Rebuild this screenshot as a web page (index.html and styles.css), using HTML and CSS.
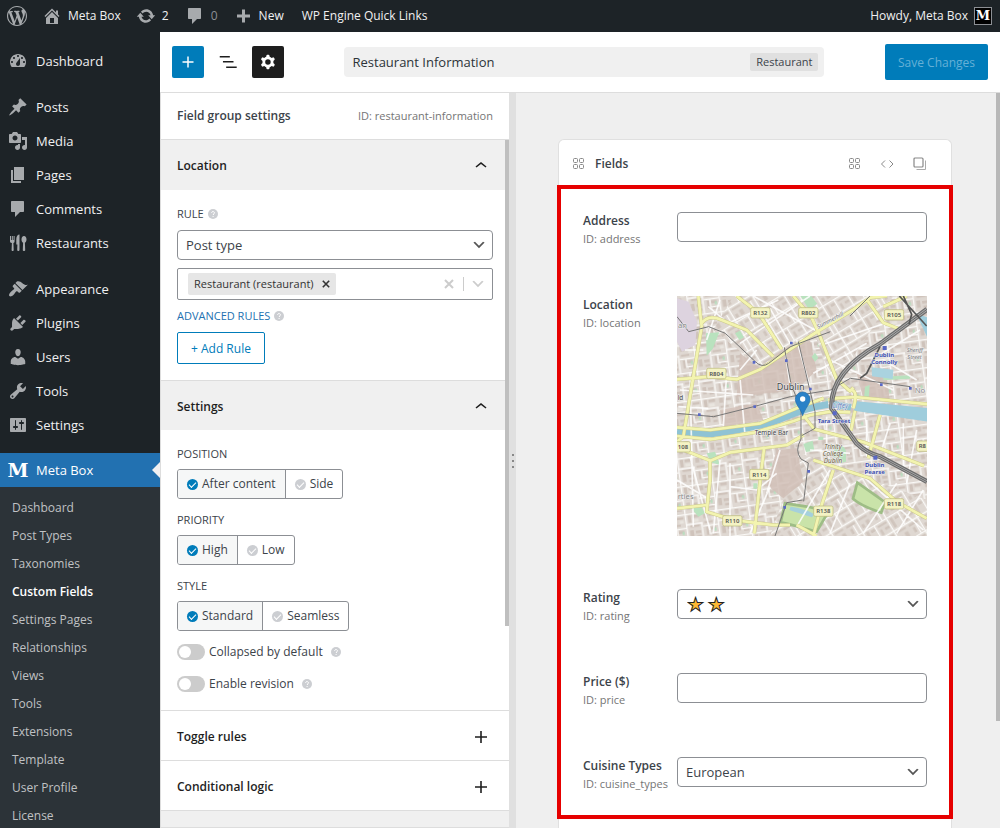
FILE: index.html
```html
<!DOCTYPE html>
<html lang="en">
<head>
<meta charset="utf-8">
<title>Restaurant Information</title>
<link rel="stylesheet" href="styles.css">
</head>
<body>
<svg class="sprite" aria-hidden="true">
  <symbol id="i-down" viewBox="0 0 20 20"><path d="M5 6l5 5 5-5 2 1-7 7-7-7z" fill="currentColor"/></symbol>
  <symbol id="i-up" viewBox="0 0 24 24"><path d="M6.500 12.400L12 8l5.500 4.400-.9 1.200L12 10l-4.500 3.600z" fill="currentColor"/></symbol>
  <symbol id="i-plus" viewBox="0 0 24 24"><path d="M18 11.200h-5.200V6h-1.600v5.200H6v1.600h5.200V18h1.600v-5.200H18z" fill="currentColor"/></symbol>
  <symbol id="i-help" viewBox="0 0 10 10"><circle cx="5" cy="5" r="5" fill="#ccced2"/><path d="M3.500 3.900C3.600 2.100 6.500 2.200 6.500 3.800c0 1-1.400 1.100-1.400 2.200M5.100 7v1" fill="none" stroke="#fff" stroke-width="1"/></symbol>
  <symbol id="i-x" viewBox="0 0 10 10"><path d="M1 1l8 8M9 1L1 9" fill="none" stroke="currentColor" stroke-width="2"/></symbol>
  <symbol id="i-dots" viewBox="0 0 12 12"><g fill="none" stroke="currentColor"><rect x=".5" y=".5" width="4" height="4" rx="1"/><rect x="6.500" y=".5" width="4" height="4" rx="1"/><rect x=".5" y="6.500" width="4" height="4" rx="1"/><rect x="6.500" y="6.500" width="4" height="4" rx="1"/></g></symbol>
  <symbol id="i-comment" viewBox="0 0 20 20"><path fill="currentColor" d="M4 2h11c.6 0 1 .4 1 1v9c0 .6-.4 1-1 1h-3l-5 5v-5H4c-.6 0-1-.4-1-1V3c0-.6.4-1 1-1z"/></symbol>
</svg>

<header class="adminbar">
  <a class="bar-item bar-logo" href="#" aria-label="About WordPress"><svg class="ico" viewBox="0 0 20 20"><path fill="currentColor" d="M20 10c0-5.510-4.490-10-10-10C4.480 0 0 4.490 0 10c0 5.520 4.480 10 10 10 5.510 0 10-4.480 10-10zM7.780 15.370L4.370 6.220c.55-.02 1.170-.08 1.170-.08.5-.06.44-1.130-.06-1.110 0 0-1.450.11-2.370.11-.18 0-.37 0-.58-.01C4.120 2.690 6.870 1.110 10 1.110c2.330 0 4.450.87 6.050 2.340-.68-.11-1.650.39-1.650 1.580 0 .74.45 1.360.9 2.100.35.61.55 1.360.55 2.460 0 1.490-1.400 5-1.400 5l-3.030-8.370c.54-.02.82-.17.82-.17.5-.05.44-1.250-.06-1.220 0 0-1.440.12-2.380.12-.87 0-2.330-.12-2.330-.12-.5-.03-.56 1.200-.06 1.220l.92.08 1.260 3.410zM17.410 10c.24-.64.74-1.870.43-4.250.7 1.290 1.050 2.710 1.050 4.250 0 3.290-1.730 6.240-4.400 7.780.97-2.590 1.940-5.200 2.920-7.780zM6.100 18.090C3.120 16.650 1.110 13.530 1.110 10c0-1.300.23-2.480.72-3.590C3.250 10.300 4.670 14.200 6.100 18.090zm4.030-6.630l2.580 6.980c-.86.29-1.760.45-2.710.45-.79 0-1.570-.11-2.290-.33.81-2.380 1.620-4.740 2.420-7.100z"/></svg></a>
  <a class="bar-item" href="#"><svg class="ico" viewBox="0 0 20 20"><path fill="currentColor" fill-rule="evenodd" d="M16 8.500l1.530 1.530-1.060 1.060L10 4.600l-6.470 6.490-1.060-1.060L10 2.500l4 4v-2h2v4zm-6-2.460l6 5.990V18H4v-5.970zM12 17v-5H8v5h4z"/></svg>Meta Box</a>
  <a class="bar-item" href="#"><svg class="ico" viewBox="0 0 20 20"><path fill="currentColor" d="M10.200 3.280c3.530 0 6.430 2.610 6.920 6h2.080l-3.500 4-3.500-4h2.320c-.45-1.970-2.210-3.450-4.320-3.450-1.450 0-2.730.71-3.540 1.780L4.950 5.660C6.230 4.200 8.110 3.280 10.200 3.280zm-.4 13.440c-3.520 0-6.430-2.610-6.920-6H.8l3.500-4 3.500 4H5.480c.45 1.970 2.210 3.450 4.320 3.450 1.450 0 2.730-.71 3.540-1.780l1.710 1.950c-1.280 1.460-3.150 2.380-5.250 2.380z"/></svg>2</a>
  <a class="bar-item muted" href="#"><svg class="ico" viewBox="0 0 20 20"><use href="#i-comment"/></svg>0</a>
  <a class="bar-item bar-new" href="#"><svg class="ico" viewBox="0 0 20 20"><path fill="currentColor" d="M17 8.500v3h-5v5H9v-5H4v-3h5v-5h3v5z"/></svg>New</a>
  <a class="bar-item" href="#">WP Engine Quick Links</a>
  <a class="bar-item bar-user" href="#">Howdy, Meta Box<span class="avatar">M</span></a>
</header>

<div class="shell">
  <nav class="sidebar" aria-label="Main menu">
    <ul class="menu">
      <li><a href="#"><svg class="ico" viewBox="0 0 20 20"><path fill="currentColor" fill-rule="evenodd" d="M3.760 16h12.480c1.100-1.370 1.760-3.110 1.760-5 0-4.420-3.580-8-8-8s-8 3.580-8 8c0 1.890.66 3.630 1.760 5zM10 4c.55 0 1 .45 1 1s-.45 1-1 1-1-.45-1-1 .45-1 1-1zM6 6c.55 0 1 .45 1 1s-.45 1-1 1-1-.45-1-1 .45-1 1-1zm8 0c.55 0 1 .45 1 1s-.45 1-1 1-1-.45-1-1 .45-1 1-1zm-5.370 5.550L12 7v6c0 1.100-.9 2-2 2s-2-.9-2-2c0-.57.24-1.080.63-1.450zM4 10c.55 0 1 .45 1 1s-.45 1-1 1-1-.45-1-1 .45-1 1-1zm12 0c.55 0 1 .45 1 1s-.45 1-1 1-1-.45-1-1 .45-1 1-1z"/></svg>Dashboard</a></li>
      <li class="gap"><a href="#"><svg class="ico" viewBox="0 0 20 20"><path fill="currentColor" d="M10.440 3.020l1.820-1.820 6.360 6.350-1.830 1.820c-1.050-.68-2.480-.57-3.410.36l-.75.75c-.92.93-1.040 2.350-.35 3.410l-1.830 1.820-2.410-2.410-2.800 2.790c-.42.42-3.380 2.710-3.800 2.290s1.860-3.390 2.280-3.810l2.790-2.790L4.100 9.360l1.830-1.820c1.050.69 2.480.57 3.400-.36l.75-.75c.93-.92 1.050-2.350.36-3.410z"/></svg>Posts</a></li>
      <li><a href="#"><svg class="ico" viewBox="0 0 20 20"><path fill="currentColor" fill-rule="evenodd" d="M13 11V4c0-.55-.45-1-1-1h-1.670L9 1H5L3.670 3H2c-.55 0-1 .45-1 1v7c0 .55.45 1 1 1h10c.55 0 1-.45 1-1zM7 4.500c1.380 0 2.500 1.120 2.500 2.500S8.380 9.500 7 9.500 4.500 8.380 4.500 7 5.620 4.500 7 4.500zM14 6h5v10.500c0 1.380-1.120 2.500-2.500 2.500S14 17.880 14 16.500s1.120-2.500 2.500-2.500c.17 0 .34.02.5.05V9h-3V6zm-4 8.050V13h2v3.500c0 1.380-1.120 2.500-2.500 2.500S7 17.880 7 16.500 8.120 14 9.500 14c.17 0 .34.02.5.05z"/></svg>Media</a></li>
      <li><a href="#"><svg class="ico" viewBox="0 0 20 20"><path fill="currentColor" d="M6 15V2h10v13H6zm-1 1h8v2H3V5h2v11z"/></svg>Pages</a></li>
      <li><a href="#"><svg class="ico" viewBox="0 0 20 20"><use href="#i-comment"/></svg>Comments</a></li>
      <li><a href="#"><svg class="ico" viewBox="0 0 20 20"><path fill="currentColor" d="M2 3h1v4h.8V3h1v4h.8V3h1v5.200c0 1-.5 1.500-1.200 1.800l.3 7c0 1.400-2.100 1.400-2.100 0l.3-7C2.500 9.700 2 9.200 2 8.200zM11.500 1.500v15.300c0 1.700-2.300 1.700-2.300 0l.2-5.300H8.300V6c0-2.500 1.500-4.500 3.200-4.500zM16 3c1.500 0 2.500 1.500 2.500 3.500 0 1.600-.6 2.700-1.600 3.200l.3 7.300c0 1.400-2.400 1.400-2.400 0l.3-7.300c-1-.5-1.600-1.600-1.600-3.200C13.500 4.500 14.500 3 16 3z"/></svg>Restaurants</a></li>
      <li class="gap"><a href="#"><svg class="ico" viewBox="0 0 20 20"><path fill="currentColor" d="M14.480 11.060L7.410 3.990l1.500-1.500c.5-.56 2.300-.47 3.510.32 1.210.8 1.430 1.280 2.910 2.100 1.180.64 2.450 1.260 4.450.85zm-.71.71L6.700 4.700 4.930 6.470c-.39.39-.39 1.020 0 1.410l1.060 1.060c.39.39.39 1.030 0 1.420-.6.6-1.430 1.110-2.210 1.690-.35.26-.7.53-1.010.84C1.430 14.230.4 16.080 1.400 17.070c.99 1 2.840-.03 4.180-1.360.31-.31.58-.66.85-1.020.57-.78 1.080-1.610 1.690-2.210.39-.39 1.020-.39 1.410 0l1.060 1.060c.39.39 1.020.39 1.410 0z"/></svg>Appearance</a></li>
      <li><a href="#"><svg class="ico" viewBox="0 0 20 20"><path fill="currentColor" d="M13.110 4.360L9.870 7.600 8 5.730l3.240-3.240c.35-.34 1.050-.2 1.560.32.52.51.66 1.210.31 1.550zm-8 1.770l.91-1.120 9.010 9.010-1.190.84c-.71.71-2.630 1.160-3.820 1.160H6.140L4.900 17.260c-.59.59-1.540.59-2.120 0-.59-.58-.59-1.530 0-2.120l1.240-1.240v-3.880c0-1.130.4-3.190 1.090-3.890zm7.260 3.970l3.240-3.240c.34-.35 1.040-.21 1.550.31.52.51.66 1.210.31 1.550l-3.240 3.250z"/></svg>Plugins</a></li>
      <li><a href="#"><svg class="ico" viewBox="0 0 20 20"><path fill="currentColor" d="M10 9.250c-2.270 0-2.730-3.440-2.730-3.440C7 4.020 7.820 2 9.970 2c2.160 0 2.980 2.020 2.710 3.810 0 0-.41 3.440-2.680 3.440zm0 2.570L12.720 10c2.390 0 4.520 2.330 4.520 4.530v2.490s-3.650 1.130-7.240 1.130c-3.650 0-7.240-1.130-7.240-1.130v-2.490c0-2.250 1.940-4.480 4.470-4.480z"/></svg>Users</a></li>
      <li><a href="#"><svg class="ico" viewBox="0 0 20 20"><path fill="currentColor" fill-rule="evenodd" d="M16.680 9.770c-1.340 1.340-3.300 1.670-4.950.99l-5.410 6.520c-.99.99-2.590.99-3.580 0s-.99-2.590 0-3.570l6.520-5.420c-.68-1.650-.35-3.610.99-4.950 1.280-1.280 3.120-1.620 4.720-1.060l-2.890 2.890 2.820 2.820 2.860-2.870c.53 1.580.18 3.390-1.080 4.650zM3.810 16.210c.4.39 1.040.39 1.430 0 .4-.4.4-1.040 0-1.430-.39-.4-1.030-.4-1.430 0-.39.39-.39 1.030 0 1.430z"/></svg>Tools</a></li>
      <li><a href="#"><svg class="ico" viewBox="0 0 20 20"><path fill="currentColor" fill-rule="evenodd" d="M18 16V4c0-.55-.45-1-1-1H3c-.55 0-1 .45-1 1v12c0 .55.45 1 1 1h14c.55 0 1-.45 1-1zM8 11h1c.55 0 1 .45 1 1s-.45 1-1 1H8v1.500c0 .28-.22.5-.5.5s-.5-.22-.5-.5V13H6c-.55 0-1-.45-1-1s.45-1 1-1h1V5.500c0-.28.22-.5.5-.5s.5.22.5.5V11zm5-2h-1c-.55 0-1-.45-1-1s.45-1 1-1h1V5.500c0-.28.22-.5.5-.5s.5.22.5.5V7h1c.55 0 1 .45 1 1s-.45 1-1 1h-1v5.500c0 .28-.22.5-.5.5s-.5-.22-.5-.5V9z"/></svg>Settings</a></li>
      <li class="gap current"><a href="#"><span class="m-logo" aria-hidden="true">M</span>Meta Box</a></li>
    </ul>
    <ul class="submenu">
      <li><a href="#">Dashboard</a></li>
      <li><a href="#">Post Types</a></li>
      <li><a href="#">Taxonomies</a></li>
      <li><a class="active" href="#">Custom Fields</a></li>
      <li><a href="#">Settings Pages</a></li>
      <li><a href="#">Relationships</a></li>
      <li><a href="#">Views</a></li>
      <li><a href="#">Tools</a></li>
      <li><a href="#">Extensions</a></li>
      <li><a href="#">Template</a></li>
      <li><a href="#">User Profile</a></li>
      <li><a href="#">License</a></li>
    </ul>
  </nav>

  <main class="editor">
    <div class="toolbar">
      <div class="tools">
        <button class="tool add" aria-label="Add field"><svg viewBox="0 0 24 24"><use href="#i-plus"/></svg></button>
        <button class="tool" aria-label="Structure"><svg viewBox="0 0 24 24"><path fill="currentColor" d="M3 5.500h11v1.500H3zm3.500 5.500H18v1.500H6.500zm3.500 6h11.500v1.500H10z"/></svg></button>
        <button class="tool gear" aria-label="Settings"><svg viewBox="0 0 24 24"><path fill="currentColor" fill-rule="evenodd" d="M10.289 4.836A1 1 0 0111.275 4h1.306a1 1 0 01.987.836l.244 1.466c.787.26 1.503.679 2.108 1.218l1.393-.522a1 1 0 011.216.437l.653 1.130a1 1 0 01-.23 1.273l-1.148.944a6.025 6.025 0 010 2.435l1.149.946a1 1 0 01.23 1.272l-.653 1.130a1 1 0 01-1.216.437l-1.394-.522c-.605.54-1.320.958-2.108 1.218l-.244 1.466a1 1 0 01-.987.836h-1.306a1 1 0 01-.986-.836l-.244-1.466a5.995 5.995 0 01-2.108-1.218l-1.394.522a1 1 0 01-1.217-.436l-.653-1.131a1 1 0 01.23-1.272l1.149-.946a6.026 6.026 0 010-2.435l-1.148-.944a1 1 0 01-.23-1.272l.653-1.131a1 1 0 011.217-.437l1.393.522a5.994 5.994 0 012.108-1.218l.244-1.466zM14.929 12a3 3 0 11-6 0 3 3 0 016 0z"/></svg></button>
      </div>
      <div class="title-box">
        <input class="title-input" type="text" value="Restaurant Information" aria-label="Field group title">
        <span class="tag">Restaurant</span>
      </div>
      <button class="save">Save Changes</button>
    </div>

    <div class="columns">
      <section class="panel">
        <div class="panel-head"><h2>Field group settings</h2><span>ID: restaurant-information</span></div>
        <div class="panel-scroll">
          <button class="section-head open" aria-expanded="true">Location<svg viewBox="0 0 24 24"><use href="#i-up"/></svg></button>
          <div class="section-body">
            <label class="caption" for="rule">RULE <svg class="help"><use href="#i-help"/></svg></label>
            <div class="select-wrap rule-select"><select id="rule"><option>Post type</option></select><svg class="chev"><use href="#i-down"/></svg></div>
            <div class="multi">
              <span class="chip">Restaurant (restaurant)<button aria-label="Remove Restaurant"><svg><use href="#i-x"/></svg></button></span>
              <button class="clear" aria-label="Clear"><svg><use href="#i-x"/></svg></button>
              <i class="divider"></i>
              <button class="open-list" aria-label="Open list"><svg><use href="#i-down"/></svg></button>
            </div>
            <div class="caption link">ADVANCED RULES <svg class="help"><use href="#i-help"/></svg></div>
            <button class="add-rule">+ Add Rule</button>
          </div>

          <button class="section-head open ruled" aria-expanded="true">Settings<svg viewBox="0 0 24 24"><use href="#i-up"/></svg></button>
          <div class="section-body">
            <fieldset>
              <legend class="caption">POSITION</legend>
              <div class="segmented">
                <label><input type="radio" name="position" checked>After content</label>
                <label><input type="radio" name="position">Side</label>
              </div>
            </fieldset>
            <fieldset>
              <legend class="caption">PRIORITY</legend>
              <div class="segmented">
                <label><input type="radio" name="priority" checked>High</label>
                <label><input type="radio" name="priority">Low</label>
              </div>
            </fieldset>
            <fieldset>
              <legend class="caption">STYLE</legend>
              <div class="segmented">
                <label><input type="radio" name="style" checked>Standard</label>
                <label><input type="radio" name="style">Seamless</label>
              </div>
            </fieldset>
            <label class="toggle"><input type="checkbox">Collapsed by default <svg class="help"><use href="#i-help"/></svg></label>
            <label class="toggle"><input type="checkbox">Enable revision <svg class="help"><use href="#i-help"/></svg></label>
          </div>

          <button class="section-head ruled" aria-expanded="false">Toggle rules<svg viewBox="0 0 24 24"><use href="#i-plus"/></svg></button>
          <button class="section-head ruled" aria-expanded="false">Conditional logic<svg viewBox="0 0 24 24"><use href="#i-plus"/></svg></button>
          <div class="panel-end"></div>
          <i class="thumb"></i>
        </div>
      </section>

      <div class="resizer"><i></i><i></i><i></i></div>

      <section class="canvas">
        <i class="thumb canvas-thumb"></i>
        <div class="card">
          <div class="card-head">
            <svg><use href="#i-dots"/></svg>
            <h2>Fields</h2>
            <div class="card-actions">
              <button aria-label="Add"><svg><use href="#i-dots"/></svg></button>
              <button aria-label="Code"><svg viewBox="0 0 12 12"><path d="M4 2.500L0.500 6 4 9.500M8.500 2.500L12 6 8.500 9.500" fill="none" stroke="currentColor"/></svg></button>
              <button aria-label="Duplicate"><svg class="big" viewBox="0 0 14 14"><rect x="1" y="1" width="9" height="9" rx="1" fill="none" stroke="currentColor" stroke-width="1.200"/><path d="M12.500 3.500v9h-9" fill="none" stroke="#aaa"/></svg></button>
            </div>
          </div>
          <div class="fields">
            <div class="field"><div class="name"><label for="address">Address</label><small>ID: address</small></div><input id="address" type="text"></div>
            <div class="field"><div class="name"><b>Location</b><small>ID: location</small></div>
              <svg class="map" viewBox="21 18 750 720" role="img" aria-label="Map of Dublin">
                <defs>
                  <pattern id="blocks" width="96" height="84" patternUnits="userSpaceOnUse" patternTransform="rotate(-8)">
                    <path fill="#cfc3bb" d="M4 6h12v14H4zM20 8h20v7H20zM54 5h9v23h-9zM68 6h20v8H68zM5 29h25v6H5zM58 36h28v7H58zM8 47h8v24H8zM21 49h17v9H21zM55 51h11v22H55zM72 54h16v8H72zM74 68h14v8H74zM24 68h16v7H24z"/>
                    <path fill="#e9e5df" d="M28 19h12v8H28zM68 19h17v9H68z"/>
                    <path fill="none" stroke="#faf9f7" stroke-width="4" d="M0 2h96M47 2v82M0 43h47M47 33h49M93 33v51M18 43v25h28"/>
                    <path fill="#b7dfbf" d="M32 52h6v10h-6z"/>
                  </pattern>
                  <pattern id="blocks2" width="82" height="92" patternUnits="userSpaceOnUse" patternTransform="rotate(-31)">
                    <path fill="#d0c5bd" d="M4 8h30v6H4zM4 22h7v18H4zM20 23h15v8H20zM46 7h9v32h-9zM61 10h14v8H61zM4 52h30v7H4zM10 67h8v16h-8zM46 52h29v6H46zM46 72h9v12h-9zM63 67h12v16H63z"/>
                    <path fill="none" stroke="#faf9f7" stroke-width="4" d="M0 2h82M39 0v92M0 46h82M78 0v46M25 60v32"/>
                  </pattern>
                </defs>
                <rect x="21" y="18" width="750" height="720" fill="#dfd8d2"/>
                <rect x="21" y="18" width="750" height="720" fill="url(#blocks)"/>
                <path d="M190 18h480L490 290 430 120 270 230 130 120zM390 490l381 140v108H300z" fill="#dfd8d2"/>
                <path d="M190 18h480L490 290 430 120 270 230 130 120zM390 490l381 140v108H300z" fill="url(#blocks2)"/>
                <path fill="#d1c0b7" opacity=".85" d="M210 190l60 45 75-60 75-25 20 90-60 60-180 20zM150 360l110-20 20 50-120 20zM320 480l60-5 20 100-60 50-50-40zM560 250l90 10 10 75-80-8z"/>
                <path fill="#ddd3df" d="M21 25l35 10 25 60-5 70-40 20-15-30z"/>
                <g fill="#b9e2be"><path d="M108 130l40-3-20 50-18 20zM392 18l30-2 20 25-25 18zM195 130l15-8 12 20-14 8zM425 200l10-12 10 15-10 12zM585 290l14-5-3 42h-14zM640 260l80-4v10l-80 5zM110 490l25-5 15 40-28-8zM400 462l28-10 5 30-25 4zM491 480q30-25 37 5v30q-30 10-30-10zM60 650l30-8 15 28-20 10zM250 580h12v16h-12zM445 440h15v10h-15z"/></g>
                <path d="M345 640q80 10 130 25l-35 60q-70-20-108-28zM562 578q50 35 82 58l-10 32q-60-20-85-42z" fill="#c9e3a9" stroke="#9ebd86" stroke-width="8"/>
                <path d="M362 650q40 5 70 22l-6 10q-50-16-68-22z" fill="#a5d0dc"/>
                <path d="M605 232l65 7-2 28-62-8z" fill="#aad3df"/>
                <path d="M21 424Q80 433 130 431 260 414 330 388 410 352 475 343M490 343L543 352" fill="none" stroke="#8fc3d4" stroke-width="20"/>
                <path d="M552 333l220 21v41l-220-33zM738 70l34 12v60z" fill="#9fcddc"/>
                <g fill="none" stroke="#fff" stroke-width="5" opacity=".85">
                  <path d="M115 50l60 50 150-70M250 18l200 110M210 160L420 18M300 55l60 105M455 165l190-65M430 250l160-90M480 210l190 90M30 300l220 15M60 250l10 460M150 30l-40 120M170 250l-10 160M210 265l15 170M260 180l-50 60M345 180l20 140M380 150l40 140M45 180h55M25 350l90 5M590 390v110M470 380v110M420 480l120 10M660 400l-25 80M700 400v150M740 420l-30 160M21 570l100 60M60 500l60 220M150 510l-20 220M180 520v220M180 590l80 10 60-50M330 480l-40 130M480 540l-100 170M540 580l-60 150M580 560l180 160M680 580l-100 150M760 600l-80 130M620 200l130-80M640 210l100 60M300 590l-60 140"/>
                </g>
                <g fill="none" stroke="#cdcb8c" stroke-width="11" stroke-linejoin="round"><path id="r1" d="M85 18L95 110 40 440 21 455M21 268l100-8 80 8 70-30 150-100 130-80 50-35 50-5M95 100q20-28 60-10l75 30 80 80M200 18l65 50 70 110M370 18l55 65 25 55 50 130 40 35 10-10M640 50l70-32M590 28l50 70 50 20M475 330l20-5 60-4 220 22M21 412l100 8 150-20 120-50 70-25M21 438l100 10 130-20 120-35 50-18 60-10 60 2M400 375l32 42 150 40 180 70M555 362l-12 60M630 375l-35 130M545 300q20 5 5 55M21 472l100 40 60-25 170-22 50-30M120 510v60l-10 95 80 25 120 15 50 0M283 470l-10 80-20 180M21 655l90-10M430 510l170 55 80 70 90 50M490 540l-40 120-20 78M380 705l60 33"/></g>
                <g fill="none" stroke="#f3f4b0" stroke-width="8" stroke-linejoin="round"><use href="#r1"/></g>
                <g fill="none" stroke="#777" stroke-width="3"><path d="M21 80l35 45 60-15 50 20 90 85q20 20 40 5l65-50 120-45M21 370l110 10 120-30 110-30 120-20 60-35 180 25M343 172l20 110 30 75v90q-20 35 0 60l22 12-14 115M385 155l50 210v50l-40 22M315 738l35-100 48-8M600 18l-60 60"/></g>
                <g fill="none"><path d="M771 58L630 162Q480 245 485 355L560 460Q590 490 630 500L771 575" stroke="#6c6c6c" stroke-width="15"/><path d="M771 58L630 162Q480 245 485 355L560 460Q590 490 630 500L771 575" stroke="#aaa" stroke-width="8"/><path d="M771 58L630 162Q480 245 485 355L560 460Q590 490 630 500L771 575" stroke="#666" stroke-width="3"/><path d="M688 18l82 90M700 18l25 55-8 30M630 170l-40 80-20 15" stroke="#555" stroke-width="5"/></g>
                <g fill="#5968c5"><path d="M488 364h12v12h-12zM610 497h12v12h-12zM638 168h12v12h-12zM360 155h8v8h-8zM248 213h8v8h-8zM417 293h8v8h-8zM345 208h8v8h-8zM630 280h8v8h-8zM717 291h8v8h-8zM250 346h8v8h-8zM84 370h8v8h-8zM412 540h8v8h-8zM340 648h8v8h-8z"/></g>
                <g class="shields"><g><rect x="242" y="53" width="58" height="31" rx="5"/><rect x="386" y="53" width="58" height="31" rx="5"/><rect x="643" y="59" width="58" height="31" rx="5"/><rect x="110" y="235" width="58" height="31" rx="5"/><rect x="10" y="455" width="51" height="31" rx="5"/><rect x="239" y="538" width="58" height="31" rx="5"/><rect x="643" y="626" width="58" height="31" rx="5"/><rect x="431" y="648" width="58" height="31" rx="5"/><rect x="158" y="677" width="58" height="31" rx="5"/><rect x="740" y="453" width="50" height="31" rx="5"/></g>
                <text x="271" y="75">R132</text><text x="415" y="75">R802</text><text x="672" y="81">R105</text><text x="139" y="257">R804</text><text x="39" y="477">108</text><text x="268" y="560">R114</text><text x="672" y="648">R118</text><text x="460" y="670">R138</text><text x="187" y="699">R110</text><text x="757" y="475">R8</text></g>
                <g class="stations"><text x="643" y="200">Dublin</text><text x="643" y="222">Connolly</text><text x="492" y="398">Tara Street</text><text x="614" y="530">Dublin</text><text x="614" y="552">Pearse</text></g>
                <g class="places"><text x="320" y="299" class="city">Dublin</text><text x="254" y="434">Temple Bar</text><text x="23" y="628" class="faint">rties</text><text x="23" y="330">ld</text><text x="24" y="113" class="faint">an</text><text x="734" y="310" class="faint">No</text><text x="710" y="187" class="street">Sheriff</text><text x="712" y="208" class="street">Street</text><text x="488" y="353" class="river">Liffey</text><text x="445" y="116" class="street" transform="rotate(-28 445 116)">Summerhill</text></g>
                <g class="college"><text x="489" y="476">Trinity</text><text x="489" y="497">College</text><text x="489" y="518">Dublin</text></g>
                <path d="M398 377C392 355 376 344 376 328a22 22 0 0 1 44 0c0 16-16 27-22 49z" fill="#2a81c7" stroke="#216daa" stroke-width="2"/><circle cx="398" cy="327" r="8" fill="#fff"/>
              </svg>
            </div>
            <div class="field"><div class="name"><label for="rating">Rating</label><small>ID: rating</small></div><div class="select-wrap"><select id="rating" class="stars"><option>★&thinsp;★</option></select><svg class="chev"><use href="#i-down"/></svg></div></div>
            <div class="field"><div class="name"><label for="price">Price ($)</label><small>ID: price</small></div><input id="price" type="text"></div>
            <div class="field"><div class="name"><label for="cuisine">Cuisine Types</label><small>ID: cuisine_types</small></div><div class="select-wrap"><select id="cuisine"><option>European</option></select><svg class="chev"><use href="#i-down"/></svg></div></div>
          </div>
        </div>
      </section>
    </div>
  </main>
</div>
</body>
</html>
```
FILE: styles.css
```css
* { box-sizing: border-box; }
body {
  margin: 0;
  height: 100vh;
  overflow: hidden;
  display: flex;
  flex-direction: column;
  font: 13px/20px "Open Sans", "Noto Sans", sans-serif;
  color: #3c434a;
}
button, input, select { font: inherit; color: inherit; margin: 0; }
button { border: 0; background: none; padding: 0; }
ul { list-style: none; margin: 0; padding: 0; }
a { color: inherit; text-decoration: none; }
h2 { margin: 0; font-size: 12px; font-weight: 600; }
.sprite { position: absolute; width: 0; height: 0; }
.ico { width: 20px; height: 20px; color: #a7aaad; flex: none; }

/* Admin bar */
.adminbar {
  flex: none;
  display: flex;
  height: 32px;
  background: #1d2327;
  color: #f0f0f1;
  font-size: 12px;
}
.bar-item { display: flex; align-items: center; gap: 6px; padding: 0 8px 0 7px; white-space: nowrap; }
.bar-logo { width: 35px; }
.bar-item.muted { color: #8c8f94; padding-left: 8px; }
.bar-new { padding-right: 11px; }
.bar-user { margin-left: auto; }
.avatar {
  width: 18px;
  height: 18px;
  border: 1px solid #8c8f94;
  background: #000;
  color: #fff;
  font: bold 13px/16px "DejaVu Serif", serif;
  text-align: center;
}

/* Sidebar */
.shell { flex: 1; display: flex; min-height: 0; }
.sidebar { width: 160px; flex: none; background: #1d2327; padding-top: 12px; color: #f0f0f1; }
.menu a { display: flex; align-items: center; gap: 8px; height: 34px; padding-left: 8px; }
.menu .gap { margin-top: 12px; }
.menu .current { position: relative; margin-top: 11px; background: #2271b1; color: #fff; }
.current::after {
  content: "";
  position: absolute;
  right: 0;
  top: 9px;
  border: 8px solid transparent;
  border-left: 0;
  border-right-color: #f0f0f1;
}
.m-logo { width: 20px; display: flex; justify-content: center; font: bold 19px/20px "DejaVu Serif", serif; }
.submenu { background: #2c3338; color: #c0c2c4; padding: 7px 0 12px; font-size: 12px; }
.submenu a { display: block; padding-left: 12px; line-height: 28px; }
.submenu .active { color: #fff; font-weight: 600; }

/* Top toolbar */
.editor { flex: 1; min-width: 0; display: flex; flex-direction: column; background: #fff; }
.toolbar {
  flex: none;
  height: 61px;
  display: flex;
  align-items: center;
  justify-content: space-between;
  padding: 0 12px;
  border-bottom: 1px solid #ddd;
}
.tools { display: flex; gap: 8px; }
.tool { width: 32px; height: 32px; border-radius: 2px; color: #1e1e1e; display: grid; place-items: center; }
.tool svg { width: 22px; height: 22px; }
.tool.add { background: #007cba; color: #fff; }
.tool.gear { background: #1e1e1e; color: #fff; }
.title-box { display: flex; align-items: center; width: 480px; height: 30px; background: #f0f0f0; border-radius: 4px; padding: 0 6px 0 8px; }
.title-input { flex: 1; min-width: 0; border: 0; background: none; padding: 0; color: #2c3338; }
.tag { background: #e0e0e0; border-radius: 2px; padding: 0 6px; font-size: 11px; line-height: 18px; }
.save { height: 36px; padding: 2px 13px 0; background: #007cba; color: #66b0d6; border-radius: 2px; font-size: 12px; }

/* Settings panel */
.columns { flex: 1; min-height: 0; display: flex; }
.panel { width: 349px; flex: none; border-left: 1px solid #ddd; display: flex; flex-direction: column; }
.panel-head {
  flex: none;
  height: 47px;
  display: flex;
  align-items: center;
  justify-content: space-between;
  padding: 0 16px;
  border-bottom: 1px solid #ddd;
}
.panel-head span { font-size: 11px; color: #757575; }
.panel-scroll { position: relative; flex: 1; overflow: hidden; }
.thumb { position: absolute; right: 0; top: 0; width: 4px; height: 486px; background: #bfbfbf; }
.section-head {
  display: flex;
  align-items: center;
  justify-content: space-between;
  width: 100%;
  height: 50px;
  padding: 2px 16px 0;
  font-size: 12px;
  font-weight: 600;
  color: #1e1e1e;
}
.section-head svg { width: 24px; height: 24px; }
.section-head.open { background: #f0f0f0; }
.section-head.ruled { border-top: 1px solid #ddd; }
.section-body { padding: 16px; }
.caption { display: flex; align-items: center; gap: 4px; height: 16px; font-size: 11px; line-height: 16px; padding: 0; }
.caption.link { margin: 8px 0; color: #2271b1; }
.help { width: 10px; height: 10px; flex: none; }

.select-wrap { position: relative; }
.select-wrap select, .field input {
  width: 100%;
  height: 30px;
  display: block;
  appearance: none;
  border: 1px solid #8c8f94;
  border-radius: 4px;
  background: #fff;
  padding: 0 8px;
}
.chev { position: absolute; right: 6px; top: 7px; width: 16px; height: 16px; color: #555; pointer-events: none; }
.rule-select { margin: 8px 0; }
.multi { display: flex; align-items: center; height: 32px; border: 1px solid #8c8f94; border-radius: 2px; padding: 0 6px 0 10px; color: #ccc; }
.chip { display: flex; align-items: center; gap: 8px; height: 22px; margin-right: auto; padding: 0 6px; border-radius: 2px; background: #e6e6e6; color: #333; font-size: 11px; }
.chip button, .clear { display: grid; }
.chip svg { width: 8px; height: 8px; }
.clear svg { width: 10px; height: 10px; }
.divider { width: 1px; height: 14px; background: #ccc; margin: 0 6px 0 9px; }
.open-list { display: grid; }
.open-list svg { width: 16px; height: 16px; }
.add-rule { height: 32px; padding: 2px 13px 0; border: 1px solid #007cba; border-radius: 2px; color: #007cba; font-size: 12px; }

fieldset { border: 0; margin: 0 0 13px; padding: 0; min-width: 0; }
legend { margin-bottom: 7px; }
.segmented { display: inline-flex; height: 30px; border: 1px solid #8c8f94; border-radius: 3px; overflow: hidden; vertical-align: top; }
.segmented label { display: flex; align-items: center; gap: 4px; padding: 0 9px; font-size: 12px; }
.segmented label + label { border-left: 1px solid #8c8f94; }
.segmented label:first-child { background: #f6f7f7; }
.segmented input { appearance: none; width: 11px; height: 11px; border-radius: 50%; background: #ccced2; display: grid; place-items: center; }
.segmented input:checked { background: #007cba; }
.segmented input::before { content: ""; width: 6px; height: 3px; border: solid #fff; border-width: 0 0 1px 1px; transform: rotate(-45deg); }
.toggle { display: flex; align-items: center; gap: 4px; height: 16px; margin-bottom: 16px; font-size: 12px; }
.toggle .help { margin-left: 4px; }
.toggle input { appearance: none; width: 28px; height: 16px; border-radius: 8px; background: #ccc; padding: 2px; }
.toggle input::before { content: ""; display: block; width: 12px; height: 12px; border-radius: 50%; background: #fff; }
.toggle:last-child { margin-bottom: 2px; }
.panel-end { height: 18px; border: solid #ddd; border-width: 1px 0; background: #f0f0f0; }

.resizer { width: 7px; flex: none; background: #e0e0e0; display: flex; flex-direction: column; align-items: center; justify-content: center; gap: 4px; }
.resizer i { width: 2px; height: 2px; background: #888; }

/* Field canvas */
.canvas { position: relative; flex: 1; min-width: 0; display: flex; background: #efefef; padding: 46px 48px 0 42px; }
.canvas-thumb { height: 628px; background: #b8b8b8; }
.card { flex: 1; background: #fff; border: 1px solid #e0e0e0; border-bottom: 0; border-radius: 6px 6px 0 0; }
.card-head { display: flex; align-items: center; gap: 10px; height: 47px; padding: 0 26px 0 14px; }
.card-head svg { width: 12px; height: 12px; color: #888; }
.card-actions { display: flex; gap: 20px; margin-left: auto; }
.card-actions button { display: grid; place-items: center; width: 12px; height: 14px; }
.card-actions .big { width: 14px; height: 14px; }
.fields { display: flex; flex-direction: column; gap: 48px; padding: 25px 24px 24px; outline: 4px solid #e60000; outline-offset: -2px; }
.field { display: grid; grid-template-columns: 94px 1fr; min-height: 36px; align-items: start; }
.name { display: flex; flex-direction: column; line-height: 18px; white-space: nowrap; }
.name label, .name b { font-size: 12px; font-weight: 600; }
.name small { font-size: 11px; color: #757575; }
.stars { color: #fdb933; }
.select-wrap .stars { padding-left: 9px; font: 19px/28px "DejaVu Sans", sans-serif; -webkit-text-stroke: 1px #222; }

/* Map */
.map { display: block; width: 100%; margin-bottom: 5px; }
.map text { font-family: "Noto Sans", sans-serif; font-size: 19px; fill: #444; }
.map .shields rect { fill: #f4f3c4; stroke: #b9b877; stroke-width: 2; }
.map .shields text { font-size: 18px; font-weight: 600; text-anchor: middle; fill: #555; }
.map .stations text { font-size: 18px; font-weight: 700; text-anchor: middle; fill: #4050b0; stroke: #eee; stroke-width: 3px; paint-order: stroke; }
.map .places text { stroke: #eee; stroke-width: 3px; paint-order: stroke; }
.map .places .city { font-size: 27px; }
.map .places .faint { font-size: 23px; fill: #8a8a8a; }
.map .places .street { font-size: 17px; font-style: italic; fill: #777; }
.map .places .river { font-size: 20px; font-style: italic; fill: #5a82c0; }
.map .college text { font-size: 19px; font-style: italic; text-anchor: middle; fill: #6a6040; stroke: #eee; stroke-width: 3px; paint-order: stroke; }
```
